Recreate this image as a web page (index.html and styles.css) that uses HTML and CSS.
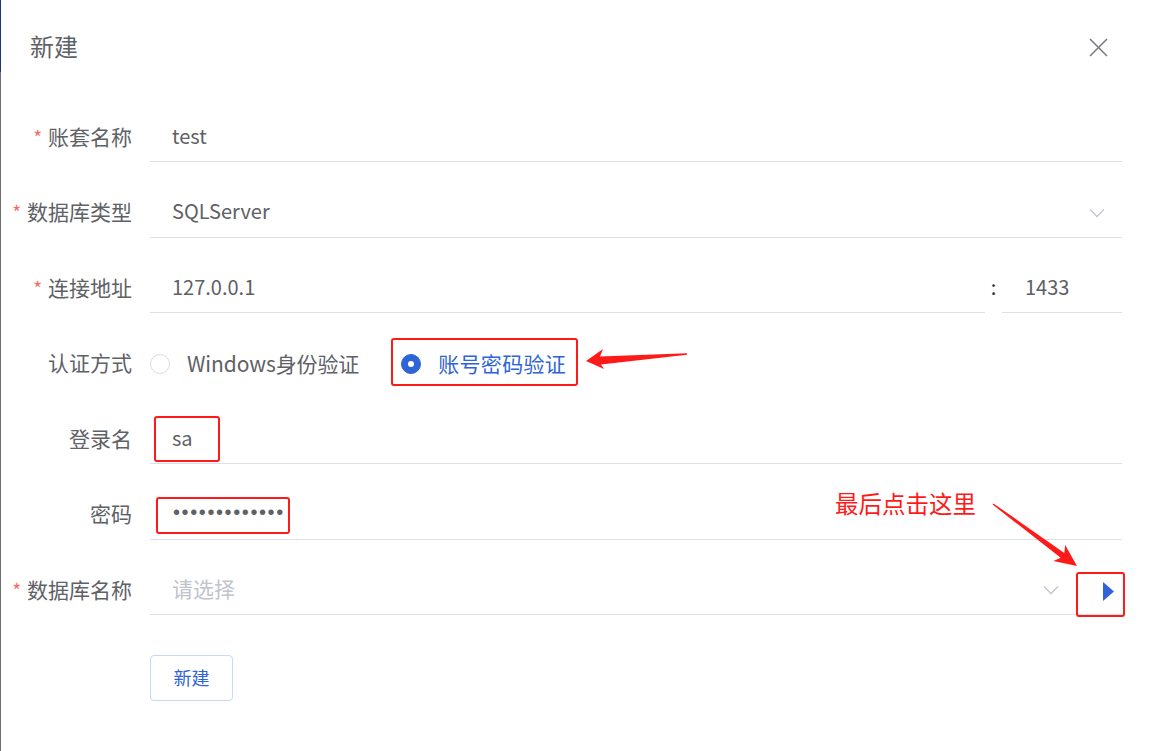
FILE: index.html
```html
<!DOCTYPE html>
<html lang="zh-CN">
<head>
<meta charset="utf-8">
<title>新建</title>
<link rel="stylesheet" href="styles.css">
</head>
<body>
<div class="dialog">
  <div class="header">
    <span class="title">新建</span>
    <span class="close">
      <svg width="19" height="19" viewBox="0 0 19 19"><path d="M1 1 L18 18 M18 1 L1 18" stroke="#7a7d82" stroke-width="1.6" fill="none"/></svg>
    </span>
  </div>
  <div class="form">
    <div class="item">
      <div class="label req">账套名称</div>
      <div class="field"><div class="input">test</div></div>
    </div>
    <div class="item">
      <div class="label req">数据库类型</div>
      <div class="field">
        <div class="input select">SQLServer
          <svg class="chev" width="16" height="10" viewBox="0 0 16 10"><polyline points="1,1.5 8,8.5 15,1.5" fill="none" stroke="#c0c4cc" stroke-width="1.3"/></svg>
        </div>
      </div>
    </div>
    <div class="item">
      <div class="label req">连接地址</div>
      <div class="field">
        <div class="input grow">127.0.0.1</div>
        <div class="colon">:</div>
        <div class="input port">1433</div>
      </div>
    </div>
    <div class="item">
      <div class="label">认证方式</div>
      <div class="field radios">
        <div class="radio"><span class="dot"></span><span class="rtext">Windows身份验证</span></div>
        <div class="radio on"><span class="dot"></span><span class="rtext">账号密码验证</span></div>
      </div>
    </div>
    <div class="item">
      <div class="label">登录名</div>
      <div class="field"><div class="input">sa</div></div>
    </div>
    <div class="item">
      <div class="label">密码</div>
      <div class="field"><div class="input"><span class="pwd">•••••••••••••</span></div></div>
    </div>
    <div class="item">
      <div class="label req">数据库名称</div>
      <div class="field">
        <div class="input select grow placeholder">请选择
          <svg class="chev" width="16" height="10" viewBox="0 0 16 10"><polyline points="1,1.5 8,8.5 15,1.5" fill="none" stroke="#c0c4cc" stroke-width="1.3"/></svg>
        </div>
        <div class="play">
          <svg width="11" height="19" viewBox="0 0 11 19"><polygon points="0,0 11,9.5 0,19" fill="#2e64d6"/></svg>
        </div>
      </div>
    </div>
    <div class="actions">
      <button class="btn">新建</button>
    </div>
  </div>

  <svg class="overlay" width="1153" height="751" viewBox="0 0 1153 751">
    <g fill="none" stroke="#ff1a1a" stroke-width="2">
      <rect x="392" y="339" width="185" height="46" rx="2"/>
      <rect x="155" y="417" width="64" height="44" rx="2"/>
      <rect x="157" y="498" width="132" height="35" rx="2"/>
      <rect x="1077" y="573" width="47" height="43" rx="2"/>
    </g>
    <g fill="#ff1a1a">
      <polygon points="586,361 603,349 600,356.5 687,353.3 687,354.7 601,364.5 604,369"/>
      <polygon points="1077,566 1053.4,560.9 1060.7,557.7 992.6,504.6 993.4,503.4 1064.3,552.9 1065.2,544.9"/>
    </g>
  </svg>
  <div class="note">最后点击这里</div>
</div>
</body>
</html>
```

FILE: styles.css
```css
* { box-sizing: border-box; }
html, body { margin: 0; padding: 0; background: #fff; }
body {
  font-family: "Noto Sans CJK SC", "Noto Sans", sans-serif;
  color: #5e6166;
}
.dialog {
  position: relative;
  width: 1153px;
  height: 751px;
  border-left: 1px solid #707070;
  border-image: linear-gradient(to bottom, #143a78 0, #143a78 73px, #6e6e6e 73px, #6e6e6e 100%) 1;
  overflow: hidden;
}
.header {
  display: flex;
  justify-content: space-between;
  align-items: center;
  padding: 30px 45px 32px 29px;
  height: 94px;
}
.title { font-size: 24px; line-height: 32px; color: #5e6166; }
.close { display: flex; margin-top: 2px; }
.form { padding-top: 19px; }
.item {
  display: flex;
  align-items: center;
  height: 49px;
  margin-bottom: 26.5px;
}
.label {
  width: 131px;
  flex-shrink: 0;
  text-align: right;
  font-size: 21px;
  color: #5e6166;
  margin-right: 18px;
  white-space: nowrap;
  padding-bottom: 4px;
}
.req::before {
  content: "*";
  color: #f56c6c;
  margin-right: 6px;
  font-size: 19px;
}
.field {
  flex: 1;
  display: flex;
  align-items: center;
  height: 49px;
  margin-right: 31px;
}
.input {
  flex: 1;
  height: 49px;
  display: flex;
  align-items: center;
  padding-left: 22px;
  padding-bottom: 4px;
  border-bottom: 1px solid #dcdfe6;
  font-size: 20px;
  color: #5e6166;
}
.grow { flex: 1; }
.select { justify-content: space-between; padding-right: 17px; }
.chev { margin-top: 4px; }
.placeholder { color: #c0c4cc; font-size: 21px; }
.colon { width: 17px; text-align: center; font-size: 20px; color: #333; padding-bottom: 4px; }
.port { flex: 0 0 120px; padding-left: 23px; }
.radios { padding-bottom: 2px; }
.radio { display: flex; align-items: center; margin-right: 42px; }
.dot {
  width: 20px;
  height: 20px;
  border-radius: 50%;
  border: 1px solid #d8dbe2;
  background: #fff;
  margin-right: 17px;
  position: relative;
  margin-top: 2px;
}
.rtext { font-size: 21px; color: #5e6166; letter-spacing: -0.1px; }
.radio.on .dot { background: #2e64d6; border-color: #2e64d6; }
.radio.on .dot::after {
  content: "";
  position: absolute;
  left: 50%; top: 50%;
  width: 6px; height: 6px;
  margin: -3px 0 0 -3px;
  border-radius: 50%;
  background: #fff;
}
.radio.on .rtext { color: #2e64d6; letter-spacing: 0.3px; }
.pwd {
  font-family: "Liberation Sans", Arial, sans-serif;
  font-size: 20px;
  letter-spacing: 1.6px;
  color: #5e6166;
  margin-left: 1px;
}
.play {
  flex: 0 0 46px;
  height: 49px;
  border-bottom: 1px solid #dcdfe6;
  display: flex;
  align-items: center;
  justify-content: flex-end;
  padding-right: 8px;
  padding-top: 2px;
}
.actions { padding-left: 149px; padding-top: 13.5px; }
.btn {
  width: 83px;
  height: 46px;
  border: 1px solid #c6d9f6;
  border-radius: 4px;
  background: #fff;
  color: #2e64d6;
  font-family: "Noto Sans CJK SC", sans-serif;
  font-size: 18px;
  padding: 0 0 2px;
}
.overlay { position: absolute; left: -1px; top: 0; pointer-events: none; }
.note {
  position: absolute;
  left: 834px;
  top: 486px;
  font-size: 23.5px;
  line-height: 34px;
  color: #ff1a1a;
  white-space: nowrap;
}
```
